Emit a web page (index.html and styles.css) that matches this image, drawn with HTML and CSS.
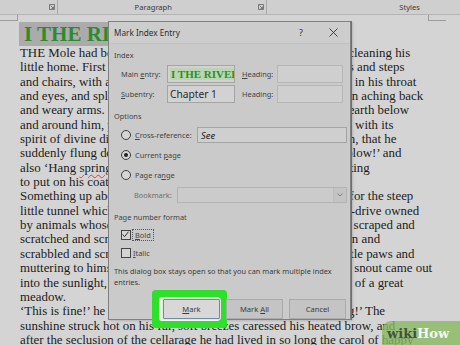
FILE: index.html
```html
<!DOCTYPE html>
<html lang="en">

<head>
  <meta charset="UTF-8">
  <meta name="viewport" content="width=device-width, initial-scale=1.0">
  <title>Mark Index Entry</title>
  <link rel="stylesheet" href="styles.css">
</head>

<body>
  <div class="ribbon">
    <div class="group g-font">
      <svg class="launcher" width="6" height="6" viewBox="0 0 6 6"><path d="M0.5 0.5h5v5h-5z M1.5 1.5l3 3 M4.5 2.5v2h-2" fill="none" stroke="#666" stroke-width="0.8"/></svg>
    </div>
    <div class="group g-para">
      <span class="group-name">Paragraph</span>
      <svg class="launcher" width="6" height="6" viewBox="0 0 6 6"><path d="M0.5 0.5h5v5h-5z M1.5 1.5l3 3 M4.5 2.5v2h-2" fill="none" stroke="#666" stroke-width="0.8"/></svg>
    </div>
    <div class="group g-styles">
      <span class="group-name">Styles</span>
    </div>
  </div>

  <div class="page">
    <h1 class="chapter"><span>I THE RIVER BANK</span></h1>
    <div class="text">
      <div>THE Mole had been working very hard all the morning, spring-cleaning his</div>
      <div>little home. First with brooms, then with dusters; then on ladders and steps</div>
      <div>and chairs, with a brush and a pail of whitewash; till he had dust in his throat</div>
      <div>and eyes, and splashes of whitewash all over his black fur, and an aching back</div>
      <div>and weary arms. Spring was moving in the air above and in the earth below</div>
      <div>and around him, penetrating even his dark and lowly little house with its</div>
      <div>spirit of divine discontent and longing. It was small wonder, then, that he</div>
      <div>suddenly flung <span class="tight-s">down his brush on the floor, said ‘Bother!’ and ‘O</span> blow!’ and</div>
      <div>also ‘Hang <span class="typo">spring<span class="tight-l">-cleaning!</span></span><span class="tight-l">’ and bolted out of the house without </span>even waiting</div>
      <div>to put on his coat.</div>
      <div>Something up above was calling him imperiously, and he made for the steep</div>
      <div>little tunnel which answered in his case to the gravelled carriage-drive owned</div>
      <div>by animals whose residences are nearer to the sun and air. So he scraped and</div>
      <div>scratched and scrabbled and scrooged and then he scrooged again and</div>
      <div>scrabbled and scratched and scraped, working busily with his little paws and</div>
      <div>muttering to himself, ‘Up we go! Up we go!’ till at last, pop! his snout came out</div>
      <div>into the sunlight, and he found himself rolling in the warm grass of a great</div>
      <div>meadow.</div>
      <div>‘This is fine!’ he <span class="tight-xs">said to himself. ‘This is better than whitewashin</span>g!’ The</div>
      <div>sunshine struck hot on his fur, soft breezes caressed his heated brow, and</div>
      <div>after the seclusion of the cellarage he had lived in so long the carol of happy</div>
    </div>
  </div>

  <div class="dialog">
    <div class="dlg-title">
      <span class="dlg-name">Mark Index Entry</span>
      <span class="dlg-help">?</span>
      <svg class="dlg-close" width="9" height="9" viewBox="0 0 9 9"><path d="M0.5 0.5l8 8 M8.5 0.5l-8 8" stroke="#333" stroke-width="0.9"/></svg>
    </div>
    <div class="dlg-body">
      <div class="section">Index</div>
      <div class="entry-row">
        <span class="lbl">Main <u>e</u>ntry:</span>
        <div class="field main-field"><span class="hl">I THE RIVER BANK</span></div>
        <span class="lbl lbl-head"><u>H</u>eading:</span>
        <div class="field off"></div>
      </div>
      <div class="entry-row">
        <span class="lbl"><u>S</u>ubentry:</span>
        <div class="field main-field">Chapter 1</div>
        <span class="lbl lbl-head">Heading:</span>
        <div class="field off"></div>
      </div>

      <div class="section sec-options">Options</div>
      <div class="opt-row">
        <span class="radio"></span>
        <span class="opt-lbl"><u>C</u>ross-reference:</span>
        <div class="field xref"><i>See</i></div>
      </div>
      <div class="opt-row">
        <span class="radio on"></span>
        <span class="opt-lbl">Current <u>p</u>age</span>
      </div>
      <div class="opt-row">
        <span class="radio"></span>
        <span class="opt-lbl">Page ra<u>n</u>ge</span>
      </div>
      <div class="opt-row bookmark-row">
        <span class="opt-lbl dim">Bookmark:</span>
        <div class="field select">
          <span class="select-arrow">
            <svg width="6" height="4" viewBox="0 0 6 4"><path d="M0.5 0.5l2.5 2.5 2.5-2.5" fill="none" stroke="#777" stroke-width="0.9"/></svg>
          </span>
        </div>
      </div>

      <div class="section sec-format">Page number format</div>
      <div class="check-row">
        <span class="check">
          <svg width="9" height="9" viewBox="0 0 9 9"><path d="M1.5 4.5l2 2.2 4-5" fill="none" stroke="#333" stroke-width="1"/></svg>
        </span>
        <span class="opt-lbl focus"><u>B</u>old</span>
      </div>
      <div class="check-row">
        <span class="check"></span>
        <span class="opt-lbl"><u>I</u>talic</span>
      </div>

      <p class="info">This dialog box stays open so that you can mark multiple index entries.</p>

      <div class="buttons">
        <button class="btn btn-mark"><u>M</u>ark</button>
        <button class="btn">Mark <u>A</u>ll</button>
        <button class="btn">Cancel</button>
      </div>
    </div>
  </div>

  <div class="wikihow"><span class="wiki">wiki</span><span class="how">How</span></div>
</body>

</html>
```

FILE: styles.css
```css
body {
  margin: 0;
  width: 460px;
  height: 345px;
  overflow: hidden;
  position: relative;
  background-color: #d4d4d4;
  font-family: "Noto Sans", sans-serif;
}

/* ribbon */
.ribbon {
  display: flex;
  height: 14px;
  background-color: #cfcfcf;
  border-bottom: 1px solid #b4b4b4;
  font-size: 7.6px;
  color: #3a3a3a;
}

.ribbon .group {
  display: flex;
  align-items: center;
  justify-content: flex-end;
  border-right: 1px solid #a9a9a9;
  box-sizing: border-box;
}

.g-font {
  width: 58px;
  padding-right: 2px;
}

.g-para {
  width: 209px;
  padding-right: 2px;
}

.g-para .group-name {
  margin-right: 86px;
}

.g-styles {
  flex: 1;
  border-right: 0 !important;
  padding-right: 40px;
}

.launcher {
  display: block;
}

/* document page */
.page {
  position: relative;
  padding: 7px 0 0 20px;
  font-family: "Liberation Serif", serif;
  color: #1c1c1c;
}

.page::before,
.page::after {
  content: '';
  position: absolute;
  top: 0;
  width: 17px;
  height: 5px;
}

.page::before {
  left: 0;
  border-right: 1px solid #9c9c9c;
  border-bottom: 1px solid #9c9c9c;
}

.page::after {
  left: 428px;
  border-left: 1px solid #9c9c9c;
  border-bottom: 1px solid #9c9c9c;
}

.chapter {
  margin: 0;
  font-size: 21px;
  line-height: 24px;
  color: #2e8a2e;
}

.chapter span {
  display: inline-block;
  background-color: #ababab;
  padding: 0 4px 0 5px;
  margin-left: -1px;
}

.text {
  font-size: 12.9px;
  line-height: 14.35px;
  white-space: nowrap;
}

/* hidden behind the dialog: squeeze so the visible tails line up */
.tight-l {
  letter-spacing: -1.1px;
}

.tight-s {
  letter-spacing: -0.3px;
}

.tight-xs {
  letter-spacing: -0.17px;
}

.typo {
  text-decoration: underline wavy #d04040;
  text-decoration-thickness: 1px;
  text-underline-offset: 2px;
}

/* dialog */
.dialog {
  position: absolute;
  left: 108px;
  top: 21px;
  width: 243px;
  height: 299px;
  box-sizing: border-box;
  background-color: #cacaca;
  border: 1px solid #808080;
  box-shadow: 1px 0 0 #6e6e6e, 2px 1px 2px rgba(0, 0, 0, .15);
  font-size: 7.4px;
  color: #353535;
}

.dlg-title {
  display: flex;
  align-items: center;
  height: 21px;
  padding: 0 12px 0 5px;
  border-bottom: 1px solid #c2c2c2;
  background-color: #cdcdcd;
}

.dlg-name {
  flex: 1;
  font-size: 8.2px;
  color: #2e2e2e;
}

.dlg-help {
  font-size: 9px;
  margin-right: 26px;
  color: #333;
}

.dlg-body {
  padding: 0 3px 0 5px;
}

.section {
  line-height: 12px;
  margin-top: 5px;
  color: #444;
}

.entry-row {
  display: flex;
  align-items: center;
  height: 18px;
  margin-top: 4px;
}

.entry-row+.entry-row {
  margin-top: 2px;
}

.lbl {
  width: 46px;
  padding-left: 7px;
  color: #444;
}

.lbl-head {
  width: 35px;
  padding-left: 7px;
}

.field {
  box-sizing: border-box;
  height: 100%;
  border: 1px solid #a5a5a5;
  background-color: #d2d2d2;
}

.main-field {
  width: 68px;
  display: flex;
  align-items: center;
  padding-left: 2px;
  overflow: hidden;
  white-space: nowrap;
  font-size: 10.2px;
  color: #2a2a2a;
}

.hl {
  font-family: "Liberation Serif", serif;
  font-weight: bold;
  font-size: 11px;
  color: #2f8c2f;
  background-color: #b9d6b0;
  padding: 0 1px;
}

.off {
  width: 66px;
  border-color: #b6b6b6;
  background-color: #cfcfcf;
}

.sec-options {
  margin-top: 7px;
}

.opt-row {
  display: flex;
  align-items: center;
  height: 16px;
  margin-top: 4px;
}

.sec-options+.opt-row {
  margin-top: 5px;
}

.radio {
  width: 8px;
  height: 8px;
  margin: 0 4px 0 7px;
  border: 1px solid #3f3f3f;
  border-radius: 50%;
  background-color: #d6d6d6;
  position: relative;
}

.radio.on::after {
  content: '';
  position: absolute;
  left: 2px;
  top: 2px;
  width: 4px;
  height: 4px;
  border-radius: 50%;
  background-color: #222;
}

.opt-lbl {
  color: #444;
}

.xref {
  width: 150px;
  margin-left: auto;
  display: flex;
  align-items: center;
  padding-left: 3px;
  font-size: 9.4px;
  color: #222;
  background-color: #cfcfcf;
}

.bookmark-row .dim {
  padding-left: 20px;
  color: #6e6e6e;
}

.select {
  width: 170px;
  margin-left: auto;
  display: flex;
  justify-content: flex-end;
  border-color: #b3b3b3;
  background-color: #cbcbcb;
}

.select-arrow {
  width: 12px;
  display: flex;
  align-items: center;
  justify-content: center;
  border-left: 1px solid #bdbdbd;
  background-color: #c4c4c4;
}

.sec-format {
  margin-top: 8px;
}

.check-row {
  display: flex;
  align-items: center;
  height: 12px;
  margin-top: 6px;
}

.check {
  box-sizing: border-box;
  width: 10px;
  height: 10px;
  margin: 0 2px 0 7px;
  border: 1px solid #444;
  background-color: #d4d4d4;
  display: flex;
}

.check svg {
  margin: -1px;
}

.focus {
  outline: 1px dotted #555;
  padding: 0 2px;
}

.info {
  margin: 7px 0 0;
  line-height: 11px;
  width: 230px;
  color: #3c3c3c;
}

.buttons {
  display: flex;
  justify-content: flex-end;
  gap: 6px;
  margin-top: 11px;
  padding-right: 1px;
}

.btn {
  width: 57px;
  height: 20px;
  padding: 0;
  font-family: "Noto Sans", sans-serif;
  font-size: 7.6px;
  color: #3c3c3c;
  background-color: #c4c4c4;
  border: 1px solid #aaaaaa;
}

.btn-mark {
  background-color: #d8d8d8;
  border-color: #7589a0;
  box-shadow: 0 0 0 1px #dfe9df, -2px 0 0 2px #f0f7ee, -2px 0 0 9px #2fe02a;
  border-radius: 1px;
}

/* watermark */
.wikihow {
  position: absolute;
  left: 382px;
  top: 321px;
  width: 78px;
  height: 24px;
  padding-left: 5px;
  box-sizing: border-box;
  display: flex;
  align-items: center;
  border-top-left-radius: 9px;
  background-color: rgba(135, 185, 95, .8);
  font-family: "DejaVu Serif", serif;
  font-weight: bold;
  font-size: 13px;
}

.wiki {
  color: #455040;
}

.how {
  color: #f4f8f0;
}
```
